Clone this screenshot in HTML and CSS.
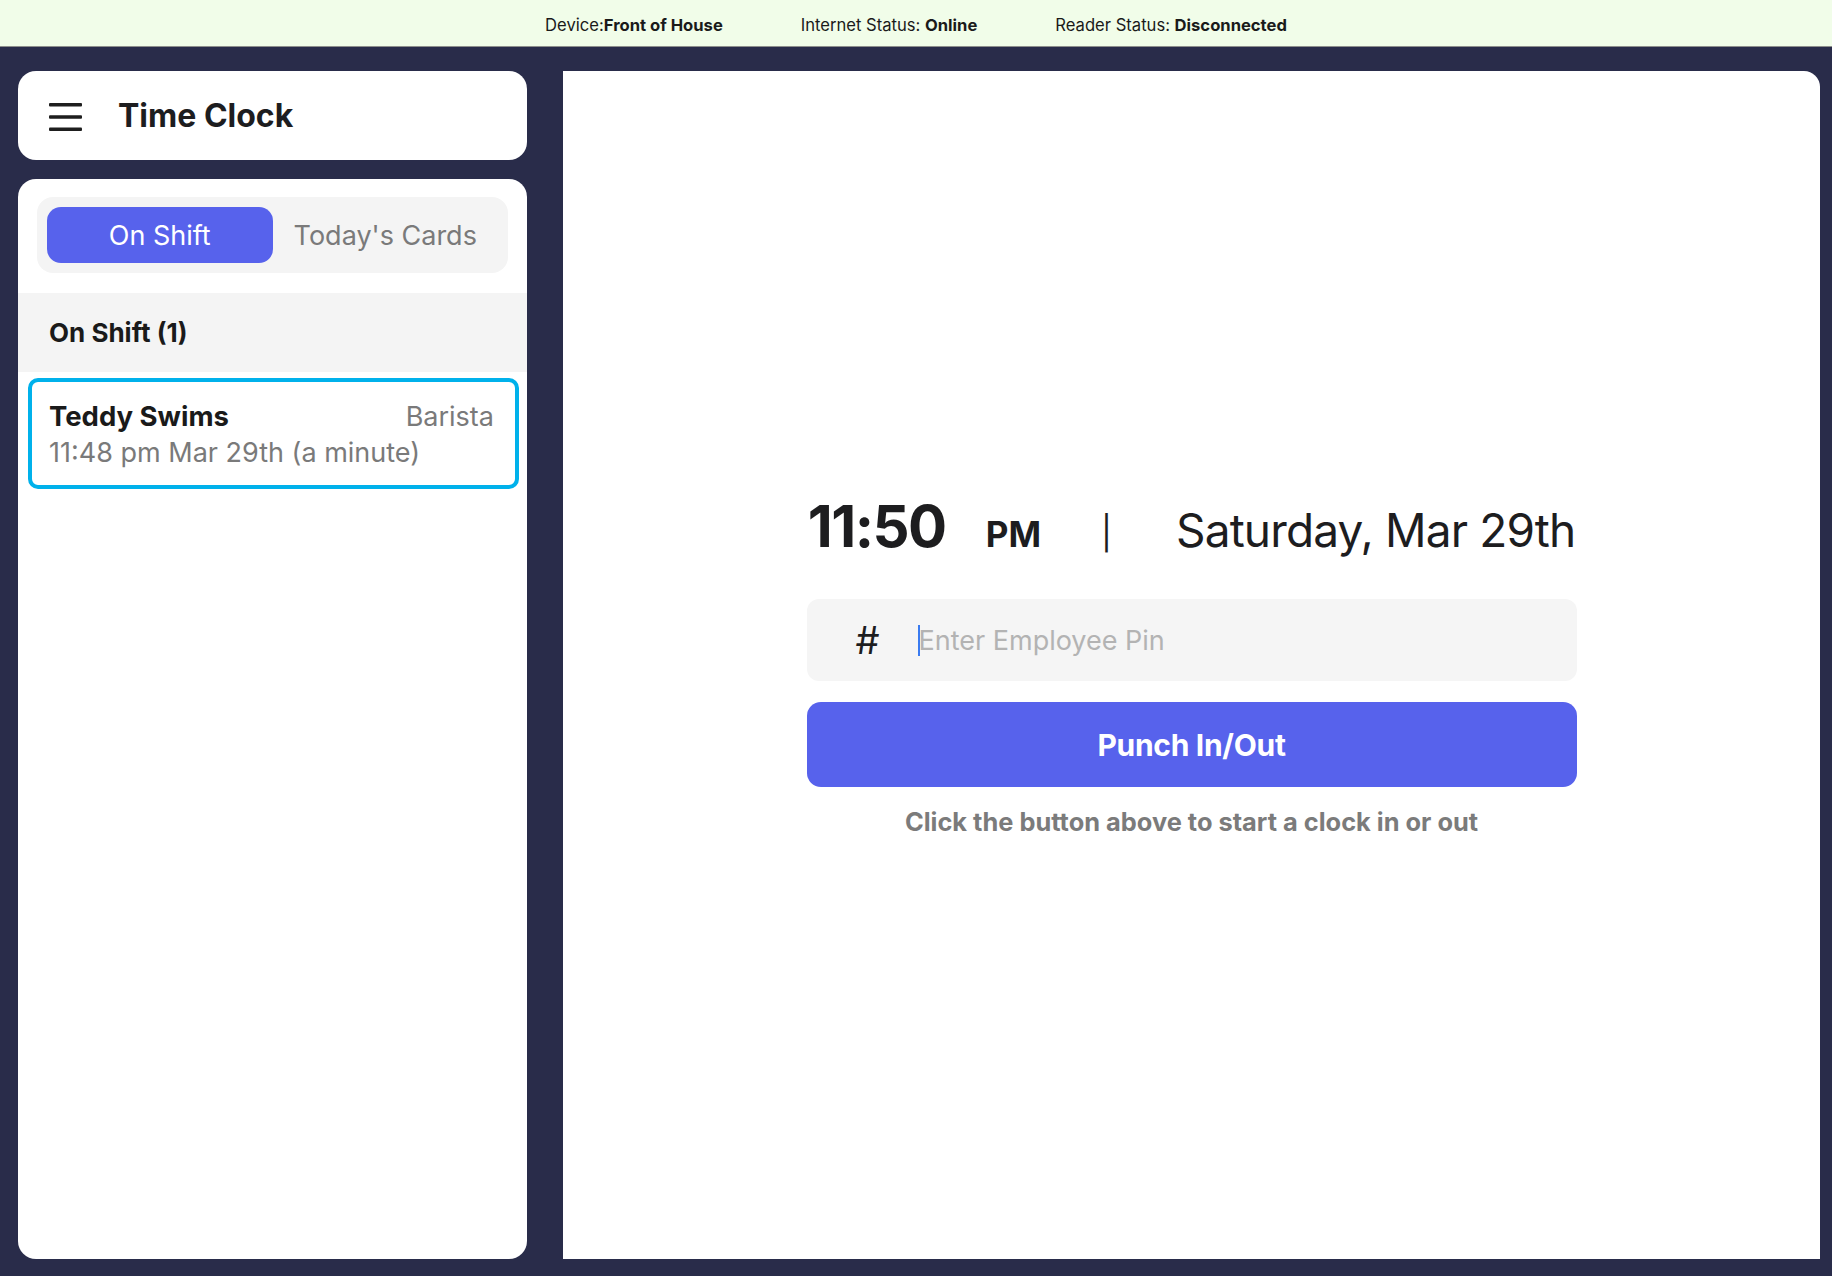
FILE: index.html
```html
<!DOCTYPE html>
<html>
<head>
<meta charset="utf-8">
<title>Time Clock</title>
<link rel="stylesheet" href="styles.css">
</head>
<body>
<div class="statusbar">
  <span class="stat">Device:<b>Front of House</b></span>
  <span class="stat">Internet Status: <b>Online</b></span>
  <span class="stat">Reader Status: <b>Disconnected</b></span>
</div>
<div class="main">
  <div class="left">
    <div class="header-card">
      <svg class="hamburger" width="33" height="28" viewBox="0 0 33 28">
        <rect x="0" y="0" width="33" height="3.4" rx="1" fill="#1e1e1e"/>
        <rect x="0" y="12.3" width="33" height="3.4" rx="1" fill="#1e1e1e"/>
        <rect x="0" y="24.6" width="33" height="3.4" rx="1" fill="#1e1e1e"/>
      </svg>
      <div class="title">Time Clock</div>
    </div>
    <div class="list-card">
      <div class="tabs">
        <div class="tab active">On Shift</div>
        <div class="tab">Today's Cards</div>
      </div>
      <div class="section-header">On Shift (1)</div>
      <div class="employee">
        <div class="emp-row">
          <span class="emp-name">Teddy Swims</span>
          <span class="emp-role">Barista</span>
        </div>
        <div class="emp-time">11:48 pm Mar 29th (a minute)</div>
      </div>
    </div>
  </div>
  <div class="panel">
    <div class="clock">
      <div class="time-row">
        <span class="time">11:50</span>
        <span class="ampm">PM</span>
        <span class="sep">|</span>
        <span class="date">Saturday, Mar 29th</span>
      </div>
      <div class="pin">
        <span class="hash">#</span>
        <span class="caret"></span>
        <span class="placeholder">Enter Employee Pin</span>
      </div>
      <div class="punch">Punch In/Out</div>
      <div class="hint">Click the button above to start a clock in or out</div>
    </div>
  </div>
</div>
</body>
</html>
```
FILE: styles.css
```css
* { box-sizing: border-box; }
html, body { margin: 0; padding: 0; }
body {
  width: 1832px;
  height: 1276px;
  background: #292c4a;
  font-family: Inter, "Noto Sans", sans-serif;
  color: #1d1d1f;
  overflow: hidden;
}
.statusbar {
  height: 47px;
  background: #f1fde9;
  border-bottom: 1px solid #8d8f8c;
  display: flex;
  justify-content: center;
  align-items: center;
  gap: 78px;
  font-size: 16.6px;
  color: #1a1a1a;
  padding-top: 3px;
}
.stat b { font-weight: 700; }
.main {
  display: flex;
  height: 1229px;
  padding: 24px 12px 17px 18px;
  gap: 36px;
}
.left {
  width: 509px;
  display: flex;
  flex-direction: column;
  gap: 19px;
}
.header-card {
  height: 89px;
  background: #fff;
  border-radius: 18px;
  display: flex;
  align-items: center;
  padding-left: 31px;
  gap: 36px;
  flex: none;
}
.hamburger { display: block; margin-top: 2px; }
.title {
  font-size: 32px;
  font-weight: 700;
  letter-spacing: 0;
  color: #1d1d1f;
}
.list-card {
  flex: 1;
  background: #fff;
  border-radius: 18px;
  padding-top: 18px;
}
.tabs {
  margin: 0 19px;
  background: #f4f4f4;
  border-radius: 16px;
  padding: 10px;
  display: flex;
}
.tab {
  flex: 1;
  height: 56px;
  border-radius: 14px;
  display: flex;
  align-items: center;
  justify-content: center;
  font-size: 27px;
  color: #7a7a7a;
}
.tab.active {
  background: #5762ec;
  color: #fff;
}
.section-header {
  margin-top: 20px;
  height: 79px;
  background: #f4f4f4;
  display: flex;
  align-items: center;
  padding-left: 31px;
  font-size: 26px;
  font-weight: 700;
  color: #1a1a1a;
}
.employee {
  margin: 6px 8px 0 10px;
  height: 111px;
  border: 4px solid #00b1eb;
  border-radius: 10px;
  padding: 17px 21px 0 17px;
}
.emp-row {
  display: flex;
  justify-content: space-between;
  align-items: baseline;
  height: 37px;
}
.emp-name {
  font-size: 27.5px;
  font-weight: 700;
  color: #1a1a1a;
}
.emp-role {
  font-size: 27px;
  color: #7a7a7a;
}
.emp-time {
  font-size: 27px;
  color: #7a7a7a;
}
.panel {
  flex: 1;
  background: #fff;
  border-top-right-radius: 16px;
  display: flex;
  align-items: center;
  justify-content: center;
}
.clock {
  width: 770px;
  display: flex;
  flex-direction: column;
  margin-top: -2px;
}
.time-row {
  display: flex;
  justify-content: center;
  align-items: baseline;
  color: #1d1d1f;
}
.time {
  font-size: 58px;
  font-weight: 700;
  letter-spacing: -1.5px;
}
.ampm {
  font-size: 35px;
  font-weight: 700;
  margin-left: 40px;
}
.sep {
  font-size: 33px;
  font-weight: 400;
  margin-left: 60px;
  margin-right: 4px;
  position: relative;
  top: -2px;
}
.date {
  font-size: 46px;
  margin-left: 60px;
  letter-spacing: -0.85px;
}
.pin {
  margin-top: 38px;
  height: 82px;
  background: #f5f5f5;
  border-radius: 12px;
  display: flex;
  align-items: center;
  padding-left: 49px;
}
.hash {
  font-size: 38px;
  color: #1d1d1f;
  width: 62px;
}
.caret {
  width: 2px;
  height: 31px;
  background: #3a7bf0;
}
.placeholder {
  font-size: 27px;
  color: #b3b3b3;
  margin-left: -1px;
}
.punch {
  margin-top: 21px;
  height: 85px;
  background: #5762ec;
  border-radius: 14px;
  display: flex;
  align-items: center;
  justify-content: center;
  color: #fff;
  font-size: 30px;
  font-weight: 700;
  letter-spacing: -0.3px;
}
.hint {
  margin-top: 19px;
  text-align: center;
  font-size: 25.4px;
  font-weight: 700;
  color: #7b7b7b;
}
```
